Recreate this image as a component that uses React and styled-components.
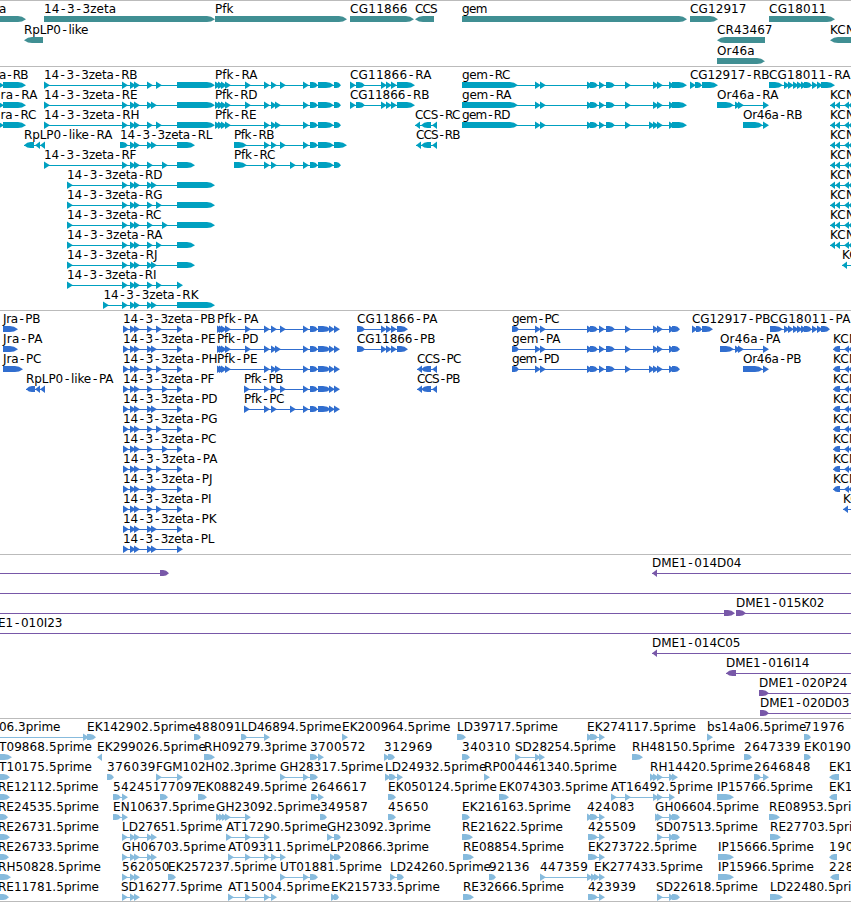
import styled, { createGlobalStyle } from "styled-components";

const GlobalStyle = createGlobalStyle`
  body {
    margin: 0;
    background: #ffffff;
    overflow: hidden;
  }
`;

const Browser = styled.main`
  display: flex;
  flex-direction: column;
  width: 851px;
  height: 902px;
  box-sizing: border-box;
  border-bottom: 1px solid #bbbbbb;
  overflow: hidden;
`;

const Track = styled.section`
  display: flex;
  flex-direction: column;
  flex: none;
  box-sizing: border-box;
  height: ${(props) => props.$height}px;
  border-top: 1px solid #bbbbbb;
  color: ${(props) => props.$color};
`;

const Row = styled.svg`
  display: block;
  flex: none;
  width: 100%;
  height: ${(props) => props.$height}px;
  overflow: visible;
  fill: currentColor;
`;

const Label = styled.text`
  font-family: "DejaVu Sans", sans-serif;
  font-size: 12px;
  fill: #000000;
  white-space: pre;
`;

const Dash = styled.tspan`
  font-family: "DejaVu Sans Mono", monospace;
  font-size: 13px;
`;

// An exon is a number (small arrow head) or a [start, end] pair (block).
// Feature: f(label, x, label end, exons, options)
const f = (label, x, end, exons = [], opts = {}) => ({ label, x, end, exons, ...opts });
const left = { dir: "left" };

const zetaHead = [122, 130, 134];
const zeta = (first, mid, last) => [...first, ...zetaHead, ...mid, ...last];
const longEnd = [[177, 215]];
const shortEnd = [[177, 195]];
const pfkTail = [303, [310, 318], [318, 334], [334, 341]];
const pfkHead = [215, 218, 221, 225];
const gemTail = [587, [590, 598], 599, [606, 615], 625];
const gemMid = [...gemTail, 653, 657, 669];
const gemMidLong = [...gemTail, 649, 653, 657, 669];
const cgHead = [350, [356, 365], 381, 386, 391, [397, 415]];
const cgProtein = [[357, 365], 381, 386, 391, [397, 408]];
const cg18 = [784, 788, 793, 797, 801, [804, 812], 812, 817];
const ccs = [[421, 431], 432];

const kcn = (x) => f("KCNQ", x, x + 34, x === 830 ? [830, 835, 844, 848] : [[833, 840], 844, 848], { ...left, to: 856 });

const genes = [
  [
    f("a", -1, 6, [[-10, 26]]),
    f("14-3-3zeta", 44, 115.5, [[44, 215]]),
    f("Pfk", 215, 233, [[215, 347]]),
    f("CG11866", 350, 407, [[350, 414]]),
    f("CCS", 415, 437, [[415, 434]], left),
    f("gem", 462, 487, [[462, 687]]),
    f("CG12917", 690, 746, [[690, 718]]),
    f("CG18011", 769, 826, [[769, 835]]),
  ],
  [
    f("RpLP0-like", 24, 88, [[24, 43]], left),
    f("CR43467", 717, 772, [[717, 765]], left),
    f("KCNQ", 830, 864, [[830, 870]], left),
  ],
  [f("Or46a", 717, 754, [[717, 765]])],
];

const transcripts = [
  [
    f("a-RB", -1, 28, [-2, [3, 26]]),
    f("14-3-3zeta-RB", 44, 137, zeta([44], [147, 156], longEnd)),
    f("Pfk-RA", 215, 257, [...pfkHead, 245, 264, 271, 280, ...pfkTail]),
    f("CG11866-RA", 350, 431, cgHead),
    f("gem-RC", 462, 510, [[462, 518], 535, 540, ...gemMid, [672, 687]]),
    f("CG12917-RB", 690, 769, [690, [695, 702], [702, 718]]),
    f("CG18011-RA", 769, 850, [[769, 783], ...cg18, [821, 835]]),
  ],
  [
    f("ra-RA", 0.5, 37, [-2, [3, 26]]),
    f("14-3-3zeta-RE", 44, 137, zeta([44], [147, 151], longEnd)),
    f("Pfk-RD", 215, 257, [...pfkHead, 245, 264, 271, 275, ...pfkTail]),
    f("CG11866-RB", 350, 429, cgHead),
    f("gem-RA", 462, 511, [[462, 518], 535, 540, ...gemMid, [672, 687]]),
    f("Or46a-RA", 717, 778, [[717, 734], 735, 738, 763]),
    kcn(830),
  ],
  [
    f("ra-RC", 0.5, 36, [-2, [3, 26]]),
    f("14-3-3zeta-RH", 44, 139, zeta([44], [147, 156], longEnd)),
    f("Pfk-RE", 215, 256, [...pfkHead, 264, 271, 275, ...pfkTail]),
    f("CCS-RC", 415, 460, [415, ...ccs], left),
    f("gem-RD", 462, 510, [[462, 518], 535, 540, ...gemMidLong, [672, 687]]),
    f("Or46a-RB", 743, 802, [[743, 763], 763]),
    kcn(830),
  ],
  [
    f("RpLP0-like-RA", 24, 112, [[24, 34], 35, 40], left),
    f("14-3-3zeta-RL", 120, 212, [[120, 128], 130, 134, 147, 151, [177, 195]]),
    f("Pfk-RB", 234, 274, [[234, 247], 264, 271, 280, 303, [310, 318], [318, 334], [334, 347]]),
    f("CCS-RB", 416, 460, [416, ...ccs], left),
    kcn(830),
  ],
  [
    f("14-3-3zeta-RF", 44, 136, zeta([44], [147, 162], shortEnd)),
    f("Pfk-RC", 234, 275, [[234, 247], 264, 271, 290, ...pfkTail]),
    kcn(830),
  ],
  [f("14-3-3zeta-RD", 67, 162, zeta([67], [147, 151], longEnd)), kcn(830)],
  [f("14-3-3zeta-RG", 67, 162, zeta([67], [147, 156], longEnd)), kcn(830)],
  [f("14-3-3zeta-RC", 67, 161, zeta([67], [147, 162], longEnd)), kcn(830)],
  [f("14-3-3zeta-RA", 67, 162, zeta([67], [147, 156], shortEnd)), kcn(830)],
  [
    f("14-3-3zeta-RJ", 67, 157, zeta([67], [147, 151], shortEnd)),
    f("KCNQ", 842, 876, [842], { ...left, to: 856 }),
  ],
  [f("14-3-3zeta-RI", 67, 156, zeta([67], [147, 156], [177]))],
  [f("14-3-3zeta-RK", 103.5, 198, zeta([103], [147, 151], longEnd))],
];

const pz = (name, end, mid) => f(`14-3-3zeta-${name}`, 123, end, [123, 130, 134, ...mid, 177]);
const pfkProtein = [303, [310, 318], [318, 331], 329, 334];
const pfkStart = [217, 219, 221, 225];

const proteins = [
  [
    f("Jra-PB", 3, 40, [[3, 18]]),
    pz("PB", 215, [147, 156]),
    f("Pfk-PA", 217, 258, [...pfkStart, 245, 264, 271, 280, ...pfkProtein]),
    f("CG11866-PA", 357, 437, cgProtein),
    f("gem-PC", 512, 559, [[512, 519], 535, 540, ...gemMid, [672, 680]]),
    f("CG12917-PB", 692, 770, [692, [696, 702], [702, 713]]),
    f("CG18011-PA", 770, 850, [[770, 783], ...cg18, [821, 830]]),
  ],
  [
    f("Jra-PA", 3, 42, [[3, 18]]),
    pz("PE", 215, [147, 151]),
    f("Pfk-PD", 217, 258, [...pfkStart, 245, 264, 271, 275, ...pfkProtein]),
    f("CG11866-PB", 357, 435, cgProtein),
    f("gem-PA", 512, 560, [[512, 519], 535, 540, ...gemMid, [672, 680]]),
    f("Or46a-PA", 720, 780, [[720, 734], 735, 738, 763]),
    kcn(833),
  ],
  [
    f("Jra-PC", 3, 41, [[3, 23]]),
    pz("PH", 217, [147, 156]),
    f("Pfk-PE", 217, 257, [...pfkStart, 264, 271, 275, ...pfkProtein]),
    f("CCS-PC", 417, 461, [417, ...ccs], left),
    f("gem-PD", 512, 559, [[512, 519], 535, 540, ...gemMidLong, [672, 680]]),
    f("Or46a-PB", 743, 801, [[743, 763], 763]),
    kcn(833),
  ],
  [
    f("RpLP0-like-PA", 26, 113, [[26, 35], 35, 40], left),
    pz("PF", 214, [147, 162]),
    f("Pfk-PB", 244, 283, [244, 264, 271, 280, ...pfkProtein]),
    f("CCS-PB", 417, 460, [417, ...ccs], left),
    kcn(833),
  ],
  [
    pz("PD", 217, [147, 151]),
    f("Pfk-PC", 244, 284, [244, 264, 271, 290, ...pfkProtein]),
    kcn(833),
  ],
  [pz("PG", 217, [147, 156]), kcn(833)],
  [pz("PC", 216, [147, 162]), kcn(833)],
  [pz("PA", 217, [147, 156]), kcn(833)],
  [pz("PJ", 212, [147, 151]), kcn(833)],
  [pz("PI", 211, [147, 156]), f("KCNQ", 843, 877, [843], { ...left, to: 856 })],
  [pz("PK", 216, [147, 151])],
  [pz("PL", 214, [147, 151])],
];

const clones = [
  [
    f("", 0, 0, [[160, 169]], { from: 0 }),
    f("DME1-014D04", 652, 741, [652], { ...left, to: 851 }),
  ],
  [f("", 0, 0, [], { from: 0, to: 851 })],
  [
    f("", 0, 0, [[724, 735]], { from: 0 }),
    f("DME1-015K02", 736, 824, [[736, 746]], { to: 851 }),
  ],
  [f("E1-010I23", -2, 62, [], { from: 0, to: 851 })],
  [f("DME1-014C05", 652, 740, [652], { ...left, to: 851 })],
  [f("DME1-016I14", 726, 809, [[726, 736]], { ...left, to: 851 })],
  [f("DME1-020P24", 759, 847, [[759, 769]], { to: 851 })],
  [f("DME1-020D03", 760, 849, [[760, 769]], { to: 851 })],
];

const shortGem = [[588, 598], 599];

const ests = [
  [
    f("06.3prime", -1, 60, [83, [87, 96]], { from: 0 }),
    f("EK142902.5prime", 87, 195.5),
    f("488091", 194, 241, [[194, 201]]),
    f("LD46894.5prime", 241, 341, [[241, 247], 264]),
    f("EK200964.5prime", 342, 450, [342]),
    f("LD39717.5prime", 457, 557.5, [[457, 466]]),
    f("EK274117.5prime", 587, 695.5, [587, [590, 598], 599]),
    f("bs14a06.5prime", 707, 806, [707]),
    f("71976", 804, 844, [[804, 811]]),
  ],
  [
    f("T09868.5prime", -1, 91.5, [[0, 12]]),
    f("EK299026.5prime", 97, 205.5, [97], left),
    f("RH09279.3prime", 204, 306.5, [[204, 215]]),
    f("3700572", 310, 365, [[310, 318], 318]),
    f("312969", 384, 432, [384, [388, 395]]),
    f("340310", 462, 510, [[462, 470]]),
    f("SD28254.5prime", 515, 615.5, [515, 535, 539]),
    f("RH48150.5prime", 632, 734.5, [[632, 643]]),
    f("2647339", 744, 800, [[744, 752]]),
    f("EK0190", 804, 850.5, [[804, 811]]),
  ],
  [
    f("T10175.5prime", -1, 91.5, [[0, 10]]),
    f("376039", 107, 155, [[107, 114]]),
    f("FGM102H02.3prime", 156, 276, [156, 177]),
    f("GH28317.5prime", 280, 383, [280, 303, [310, 318]]),
    f("LD24932.5prime", 385, 486, [385, [389, 396], 397]),
    f("RP004461340.5prime", 484, 616.5, [484]),
    f("RH14420.5prime", 650, 752.5, [650, 653, 657, 669, 672]),
    f("2646848", 754, 810, [[754, 761], 763]),
    f("EK1", 829, 852, [[829, 839]], left),
  ],
  [
    f("RE12112.5prime", -2, 98, [[0, 10]]),
    f("542451", 113, 160, [[113, 121], 122]),
    f("77097", 160, 199, [[160, 168]]),
    f("EK088249.5prime", 198, 306.5, [[198, 207]]),
    f("2646617", 311, 366.5, [[311, 318], 318]),
    f("EK050124.5prime", 388, 496.5, [[388, 396]]),
    f("EK074303.5prime", 499, 607.5, [[499, 509]]),
    f("AT16492.5prime", 611, 712.5, [611, 625, 653, 657, 669]),
    f("IP15766.5prime", 717, 812.5, [[717, 734]]),
    f("EK1", 829, 852, [[829, 837]], left),
  ],
  [
    f("RE24535.5prime", -2, 98.5, [[0, 8]]),
    f("EN10637.5prime", 113, 214.5, [[113, 121], 122]),
    f("GH23092.5prime", 216, 320, [216, 219, 222, 225, 245]),
    f("349587", 320, 367.5, [[320, 327]]),
    f("45650", 388, 428, [[388, 396]]),
    f("EK216163.5prime", 462, 570.5, [[462, 470]]),
    f("424083", 587, 634, [587, [590, 598], 599]),
    f("GH06604.5prime", 655, 758.5, [655, 657, 669, [672, 680]]),
    f("RE08953.5prime", 769, 870, [[769, 780]]),
  ],
  [
    f("RE26731.5prime", -2, 98.5, [[0, 10]]),
    f("LD27651.5prime", 122, 222, [122, 130, 134, 147, 151]),
    f("AT17290.5prime", 226, 327, [226, 245, 264]),
    f("GH23092.3prime", 327, 430.5, [327, [334, 341]]),
    f("RE21622.5prime", 462, 562.5, [[462, 473]]),
    f("425509", 588, 635.5, shortGem),
    f("SD07513.5prime", 656, 757.5, [657, 669, [672, 680]]),
    f("RE27703.5prime", 770, 871, [[770, 781]]),
  ],
  [
    f("RE26733.5prime", -2, 98.5, [[0, 9]]),
    f("GH06703.5prime", 122, 225.5, [122, 130, 134, 147, 151]),
    f("AT09311.5prime", 228, 329.5, [228, 245, 264, 271, 280]),
    f("LP20866.3prime", 330, 428.5, [330, [334, 341]]),
    f("RE08854.5prime", 463, 563.5, [[463, 474]]),
    f("EK273722.5prime", 588, 696.5, shortGem),
    f("IP15666.5prime", 718, 813.5, [[718, 734]]),
    f("190", 829, 853, [[829, 837]], left),
  ],
  [
    f("RH50828.5prime", -2, 100.5, [[0, 11]]),
    f("562050", 122, 169, [122, 130, 134]),
    f("EK257237.5prime", 168, 276.5, [[168, 176]]),
    f("UT01881.5prime", 280, 381.5, [280, 303, [310, 318]]),
    f("LD24260.5prime", 390, 490.5, [390, [397, 404]]),
    f("92136", 489, 529, [[489, 496]]),
    f("447359", 540, 587.5, [540, 587, 591, 594, 599]),
    f("EK277433.5prime", 594, 702.5),
    f("IP15966.5prime", 718, 813.5, [[718, 734]]),
    f("228", 829, 853, [[830, 839]], left),
  ],
  [
    f("RE11781.5prime", -2, 98.5, [[0, 9]]),
    f("SD16277.5prime", 121, 222, [122, 130, 134]),
    f("AT15004.5prime", 228, 329.5, [228, 245, 264, 271]),
    f("EK215733.5prime", 331, 439.5, [331, [334, 339]]),
    f("RE32666.5prime", 463, 563.5, [[463, 474]]),
    f("423939", 588, 635.5, shortGem),
    f("SD22618.5prime", 656, 757.5, [657, 669, [672, 680]]),
    f("LD22480.5prime", 770, 870, [[770, 783]]),
  ],
];

const tracks = [
  { name: "genes", color: "#408f93", height: 66, rowHeight: 21, rows: genes },
  { name: "transcripts", color: "#00a0c0", height: 244, rowHeight: 20, rows: transcripts },
  { name: "proteins", color: "#316ecf", height: 244, rowHeight: 20, rows: proteins },
  { name: "clones", color: "#7858a8", height: 164, rowHeight: 20, rows: clones },
  { name: "ests", color: "#87bbdd", height: 183, rowHeight: 20, rows: ests },
];

const Exon = ({ exon, dir }) => {
  if (typeof exon === "number") {
    return dir === "left" ? (
      <path d={`M${exon} 18.2L${exon + 5} 14.5V22Z`} />
    ) : (
      <path d={`M${exon} 14.4L${exon + 6} 18.2L${exon} 22Z`} />
    );
  }
  const [start, end] = exon;
  const tip = Math.min(8, (end - start) * 0.65);
  return dir === "left" ? (
    <path d={`M${end} 15V21H${start + tip}L${start + tip / 2} 20.5L${start} 18.2L${start + tip / 2} 15.7L${start + tip} 15Z`} />
  ) : (
    <path d={`M${start} 15V21H${end - tip}L${end - tip / 2} 20.4L${end} 18.2L${end - tip / 2} 15.8L${end - tip} 15Z`} />
  );
};

// The dash is wider than the font's own hyphen and sits a pixel higher.
const FeatureLabel = ({ label, x, end }) => {
  const parts = label.split("-");
  return (
    <Label x={x} y={12} textLength={end - x + 0.5}>
      {parts.map((part, i) => (
        <tspan key={i}>
          {i > 0 && <Dash>-</Dash>}
          {part}
        </tspan>
      ))}
    </Label>
  );
};

const Feature = ({ feature }) => {
  const { label, exons, dir } = feature;
  const first = exons[0];
  const last = exons[exons.length - 1];
  const from = feature.from ?? (Array.isArray(first) ? first[0] : first);
  const to = feature.to ?? (Array.isArray(last) ? last[1] - 1 : last + 4);
  const hasLine = feature.to !== undefined || feature.from !== undefined || exons.length > 1;
  return (
    <g>
      {hasLine && <rect x={from} y={18} width={to - from} height={1} />}
      {exons.map((exon, i) => <Exon key={i} exon={exon} dir={dir} />)}
      {label && <FeatureLabel {...feature} />}
    </g>
  );
};

const App = () => {
  return (
    <>
      <GlobalStyle />
      <Browser>
        {tracks.map((track) => (
          <Track key={track.name} $height={track.height} $color={track.color}>
            {track.rows.map((row, i) => (
              <Row key={i} $height={track.rowHeight}>
                {row.map((feature, j) => <Feature key={j} feature={feature} />)}
              </Row>
            ))}
          </Track>
        ))}
      </Browser>
    </>
  );
};

export default App;
